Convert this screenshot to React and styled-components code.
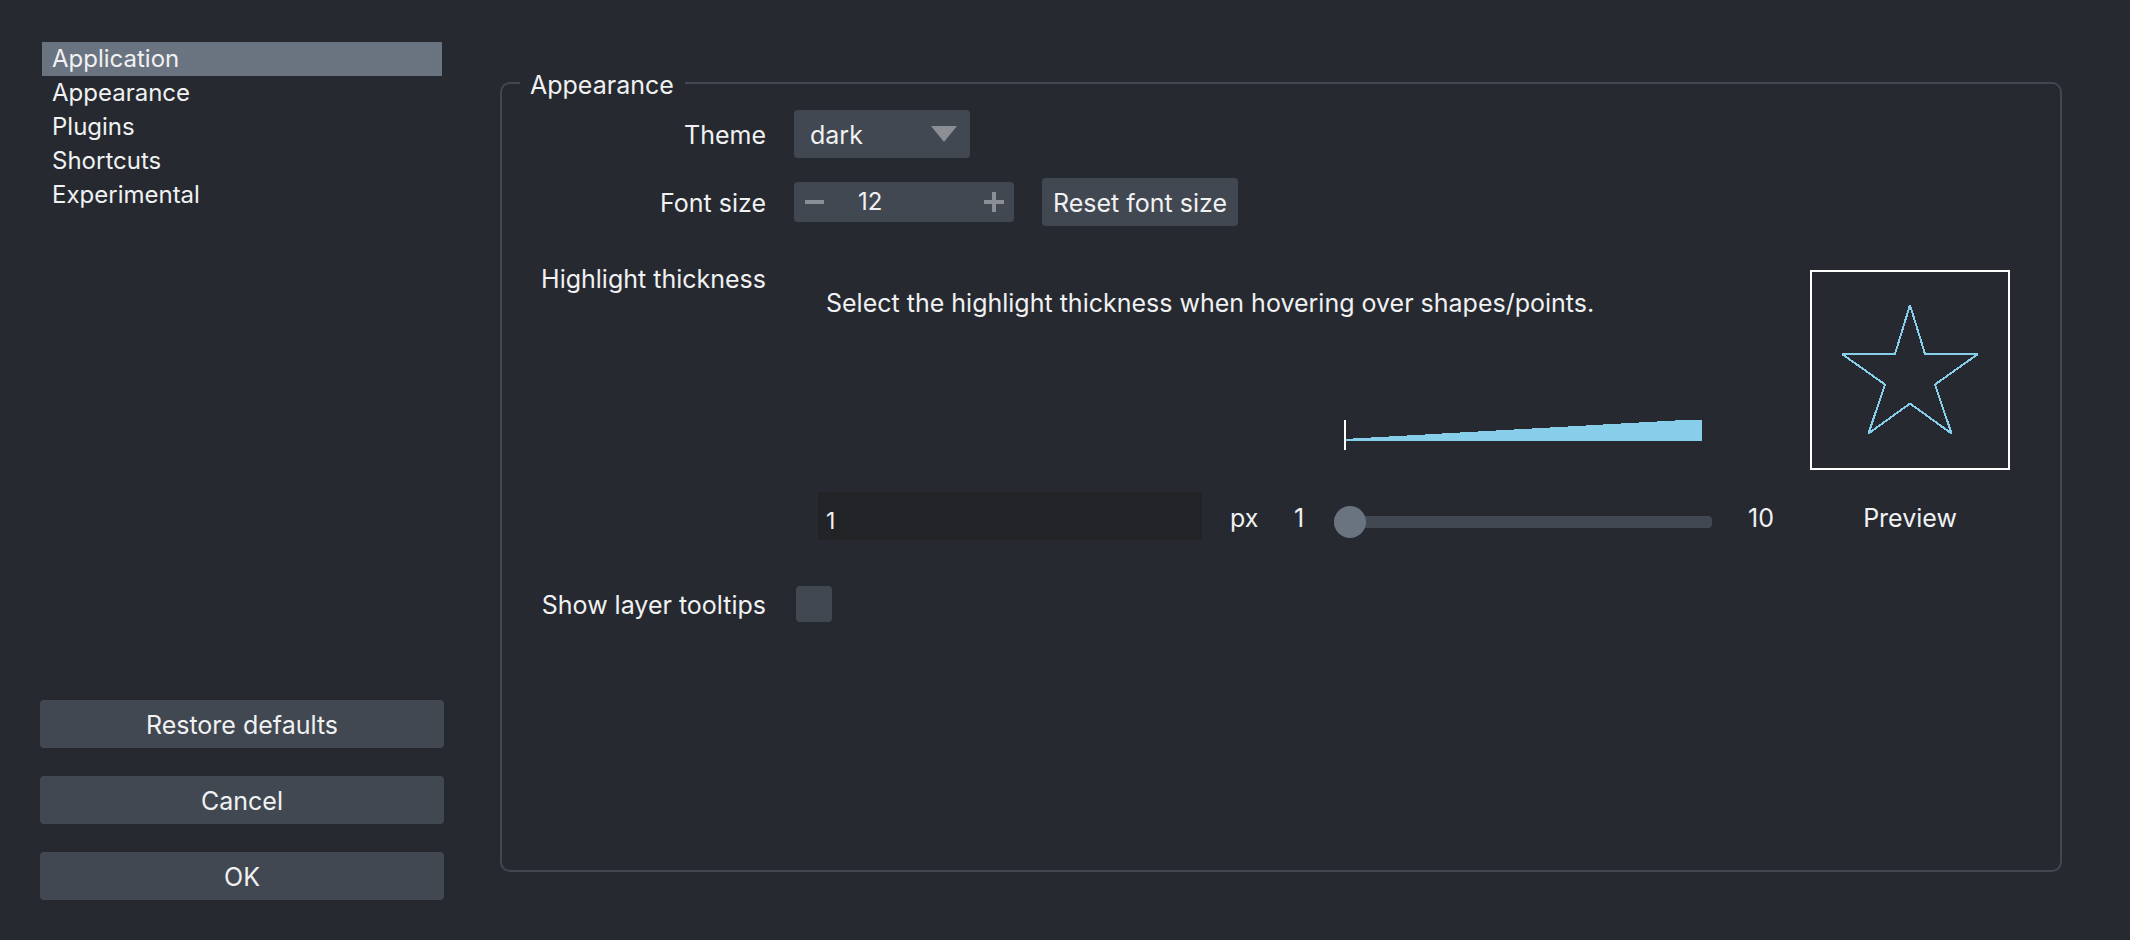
import { useState } from "react";
import styled, { createGlobalStyle } from "styled-components";

const color = {
  background: "#262930",
  foreground: "#414851",
  highlight: "#6a7380",
  text: "#f0f1f2",
  icon: "#8b8e94",
  field: "#222327",
  shape: "#87ceeb",
};

const GlobalStyle = createGlobalStyle`
  *, *::before, *::after { box-sizing: border-box; }
  body {
    margin: 0;
    background: ${color.background};
    color: ${color.text};
    font-family: Inter, "Liberation Sans", sans-serif;
    font-size: 25px;
    line-height: 30px;
  }
  button, input, select { font: inherit; color: inherit; }
`;

const Page = styled.div`
  display: flex;
  gap: 56px;
  min-height: 100vh;
  padding: 42px 68px 40px 40px;
`;

const Sidebar = styled.aside`
  display: flex;
  flex-direction: column;
  justify-content: space-between;
  gap: 40px;
  flex: 0 0 404px;
`;

const SectionList = styled.nav`
  display: flex;
  flex-direction: column;
  padding: 0 2px;
`;

const SectionLink = styled.a`
  padding: 0 10px;
  font-size: 24px;
  line-height: 34px;
  color: inherit;
  text-decoration: none;
  background: ${(p) => (p.$active ? color.highlight : "transparent")};
`;

const Actions = styled.div`
  display: flex;
  flex-direction: column;
  gap: 28px;
`;

const Button = styled.button`
  height: 48px;
  padding: 2px 11px 0;
  border: 0;
  border-radius: 4px;
  background: ${color.foreground};
  white-space: nowrap;
`;

const Group = styled.fieldset`
  flex: 1;
  min-width: 0;
  margin: 24px 0 28px;
  padding: 10px 50px 40px 24px;
  border: 2px solid ${color.foreground};
  border-radius: 10px;
`;

const GroupTitle = styled.legend`
  margin-left: -6px;
  padding: 4px 11px 0 10px;
`;

const Form = styled.div`
  display: flex;
  flex-direction: column;
  gap: 36px;
`;

const CompactRows = styled.div`
  display: flex;
  flex-direction: column;
  gap: 20px;
`;

const Row = styled.div`
  display: grid;
  grid-template-columns: 240px minmax(0, 1fr);
  column-gap: 28px;
  align-items: ${(p) => (p.$top ? "start" : "center")};
`;

const RowLabel = styled.label`
  padding-top: 2px;
  text-align: right;
  white-space: nowrap;
`;

const Controls = styled.div`
  display: flex;
  align-items: center;
  gap: 28px;
`;

const SelectBox = styled.div`
  position: relative;
  width: 176px;
`;

const Select = styled.select`
  display: block;
  appearance: none;
  width: 100%;
  height: 48px;
  padding: 2px 48px 0 16px;
  border: 0;
  border-radius: 4px;
  background: ${color.foreground};
`;

const SelectArrow = styled.svg`
  position: absolute;
  top: 16px;
  right: 13px;
  pointer-events: none;
  fill: ${color.icon};
`;

const Spinner = styled.div`
  display: flex;
  width: 220px;
  height: 40px;
  border-radius: 4px;
  background: ${color.foreground};
`;

const StepButton = styled.button`
  display: grid;
  place-items: center;
  flex: 0 0 40px;
  padding: 0;
  border: 0;
  background: none;
  svg { fill: ${color.icon}; }
`;

const SpinnerInput = styled.input`
  flex: 1;
  min-width: 0;
  padding: 0 0 0 24px;
  border: 0;
  background: none;
  font-size: 24px;
`;

const Highlight = styled.div`
  display: grid;
  grid-template-columns: 64fr 34px 14px 63fr 42px 200px;
  grid-template-rows: auto 1fr auto;
  column-gap: 28px;
  align-items: center;
  padding: 8px 0 10px 24px;
`;

const Description = styled.p`
  grid-column: 1 / 6;
  grid-row: 1;
  margin: 0;
  padding: 18px 0 0 8px;
`;

const Wedge = styled.svg`
  grid-column: 4;
  grid-row: 2;
  align-self: end;
  justify-self: center;
  width: calc(100% - 20px);
  height: 30px;
  margin-bottom: 42px;
`;

const PreviewBox = styled.svg`
  grid-column: 6;
  grid-row: 1 / 3;
  width: 200px;
  height: 200px;
  margin-bottom: 22px;
  border: 2px solid #fff;
`;

const TextField = styled.input`
  grid-column: 1;
  grid-row: 3;
  min-width: 0;
  width: 100%;
  height: 48px;
  padding: 10px 8px 0;
  border: 0;
  border-radius: 4px;
  background: ${color.field};
  font-size: 23px;
`;

const Caption = styled.span`
  grid-column: ${(p) => p.$column};
  grid-row: 3;
  padding-top: 4px;
  text-align: ${(p) => p.$align || "center"};
`;

const Slider = styled.input`
  grid-column: 4;
  grid-row: 3;
  appearance: none;
  width: 100%;
  min-width: 0;
  height: 32px;
  margin: 12px 0 0;
  background: none;

  &::-webkit-slider-runnable-track {
    height: 12px;
    border-radius: 4px;
    background: ${color.foreground};
  }
  &::-webkit-slider-thumb {
    appearance: none;
    width: 32px;
    height: 32px;
    margin-top: -10px;
    border-radius: 50%;
    background: ${color.highlight};
  }
`;

const Checkbox = styled.input`
  appearance: none;
  width: 36px;
  height: 36px;
  margin: 0 2px;
  border-radius: 4px;
  background: ${color.foreground};

  &:checked { background: ${color.highlight}; }
`;

const sections = ["Application", "Appearance", "Plugins", "Shortcuts", "Experimental"];

export default function App() {
  const [active, setActive] = useState("Application");
  const [fontSize, setFontSize] = useState(12);
  const [thickness, setThickness] = useState(1);
  const changeThickness = (e) => setThickness(e.target.value);

  return (
    <>
      <GlobalStyle />
      <Page>
        <Sidebar>
          <SectionList aria-label="Sections">
            {sections.map((name) => (
              <SectionLink
                key={name}
                href={`#${name.toLowerCase()}`}
                $active={name === active}
                onClick={() => setActive(name)}
              >
                {name}
              </SectionLink>
            ))}
          </SectionList>
          <Actions>
            <Button type="button">Restore defaults</Button>
            <Button type="button">Cancel</Button>
            <Button type="button">OK</Button>
          </Actions>
        </Sidebar>

        <Group>
          <GroupTitle>Appearance</GroupTitle>
          <Form>
            <CompactRows>
              <Row>
                <RowLabel htmlFor="theme">Theme</RowLabel>
                <SelectBox>
                  <Select id="theme" defaultValue="dark">
                    <option>dark</option>
                    <option>light</option>
                    <option>system</option>
                  </Select>
                  <SelectArrow width="26" height="16" viewBox="0 0 26 16" aria-hidden="true">
                    <path d="M0 0H26L13 16Z" />
                  </SelectArrow>
                </SelectBox>
              </Row>
              <Row>
                <RowLabel htmlFor="font-size">Font size</RowLabel>
                <Controls>
                  <Spinner>
                    <StepButton type="button" aria-label="Decrease" onClick={() => setFontSize((n) => Number(n) - 1)}>
                      <svg width="20" height="20" viewBox="0 0 20 20"><path d="M1 8H20V12H1Z" /></svg>
                    </StepButton>
                    <SpinnerInput
                      id="font-size"
                      inputMode="numeric"
                      value={fontSize}
                      onChange={(e) => setFontSize(e.target.value)}
                    />
                    <StepButton type="button" aria-label="Increase" onClick={() => setFontSize((n) => Number(n) + 1)}>
                      <svg width="20" height="20" viewBox="0 0 20 20">
                        <path d="M8 0H12V8H20V12H12V20H8V12H0V8H8Z" />
                      </svg>
                    </StepButton>
                  </Spinner>
                  <Button type="button" onClick={() => setFontSize(12)}>Reset font size</Button>
                </Controls>
              </Row>
            </CompactRows>

            <Row $top>
              <RowLabel htmlFor="thickness">Highlight thickness</RowLabel>
              <Highlight>
                <Description>Select the highlight thickness when hovering over shapes/points.</Description>
                <Wedge viewBox="0 0 358 30" preserveAspectRatio="none" shapeRendering="crispEdges" aria-hidden="true">
                  <path d="M2 19L9 18.5L331 .5L340 0H358V21H2Z" fill={color.shape} />
                  <path d="M0 0H2V30H0Z" fill="#fff" />
                </Wedge>
                <PreviewBox viewBox="2 2 196 196" shapeRendering="crispEdges" aria-hidden="true">
                  <path
                    d="M100 35L115 84H168L125 114.5L141.500 163.500L100 133.500L58.500 163.500L75 114.500L32 84H85Z"
                    fill="none"
                    stroke={color.shape}
                    strokeWidth={Math.max(2, thickness * 2)}
                    strokeLinejoin="bevel"
                  />
                </PreviewBox>
                <TextField id="thickness" inputMode="numeric" value={thickness} onChange={changeThickness} />
                <Caption $column={2} $align="left">px</Caption>
                <Caption $column={3}>1</Caption>
                <Slider
                  type="range"
                  min="1"
                  max="10"
                  aria-label="Highlight thickness"
                  value={thickness}
                  onChange={changeThickness}
                />
                <Caption $column={5}>10</Caption>
                <Caption $column={6}>Preview</Caption>
              </Highlight>
            </Row>

            <Row>
              <RowLabel htmlFor="tooltips">Show layer tooltips</RowLabel>
              <Controls>
                <Checkbox id="tooltips" type="checkbox" />
              </Controls>
            </Row>
          </Form>
        </Group>
      </Page>
    </>
  );
}
